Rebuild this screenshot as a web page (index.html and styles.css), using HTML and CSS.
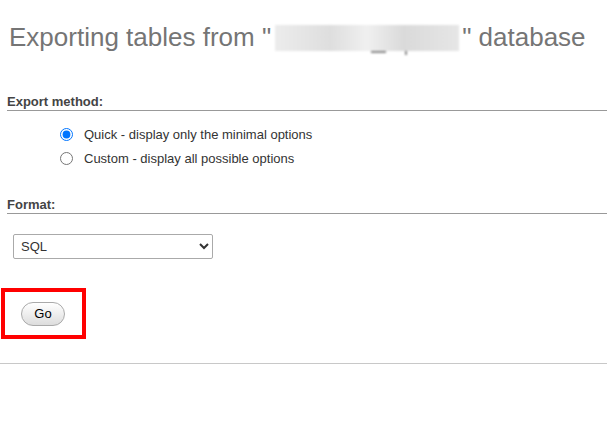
FILE: index.html
```html
<!DOCTYPE html>
<html>
<head>
<meta charset="utf-8">
<link rel="stylesheet" href="styles.css">
</head>
<body>
<h2 class="title">Exporting tables from "<span class="blur"><span class="blur-u"></span><span class="blur-p"></span></span>" database</h2>

<div class="section">
  <h3 class="sec-head">Export method:</h3>
  <ul class="options">
    <li class="opt"><input type="radio" name="m" checked><label>Quick - display only the minimal options</label></li>
    <li class="opt"><input type="radio" name="m"><label>Custom - display all possible options</label></li>
  </ul>
</div>

<div class="section fmt">
  <h3 class="sec-head">Format:</h3>
  <div class="select-wrap">
    <select class="select"><option>SQL</option></select>
  </div>
</div>

<div class="go-area">
  <div class="highlight">
    <button class="go">Go</button>
  </div>
</div>
<hr class="rule">
</body>
</html>
```
FILE: styles.css
```css
html, body {
  margin: 0;
  padding: 0;
  background: #fff;
  font-family: "Liberation Sans", Arial, sans-serif;
  font-size: 13px;
  color: #333;
}
.title {
  margin: 0;
  padding: 22px 0 0 9px;
  height: 40px;
  font-size: 26px;
  font-weight: normal;
  color: #757575;
  line-height: 30px;
  white-space: nowrap;
}
.blur {
  display: inline-block;
  position: relative;
  width: 184px;
  height: 26px;
  vertical-align: -5px;
  margin: 0 3px 0 4px;
  background: linear-gradient(90deg, #ececec, #dedede 30%, #f0f0f0 50%, #dadada 70%, #e6e6e6);
  filter: blur(1.2px);
}
.blur-u {
  position: absolute;
  left: 96px;
  top: 26px;
  width: 15px;
  height: 2px;
  background: #8a8a8a;
}
.blur-p {
  position: absolute;
  left: 130px;
  top: 26px;
  width: 2px;
  height: 4px;
  background: #8a8a8a;
}
.section {
  padding-top: 32px;
}
.sec-head {
  margin: 0 0 0 7px;
  padding-bottom: 1px;
  font-size: 13px;
  font-weight: bold;
  color: #444;
  border-bottom: 1px solid #999;
  line-height: 15px;
}
.options {
  list-style: none;
  margin: 0;
  padding: 11px 0 0 59px;
}
.opt {
  display: flex;
  align-items: center;
  height: 24px;
}
.opt input {
  margin: 0 11px 0 1px;
  width: 13px;
  height: 13px;
}
.opt label {
  color: #333;
}
.fmt {
  padding-top: 27px;
}
.select-wrap {
  padding: 20px 0 0 13px;
}
.select {
  width: 200px;
  height: 25px;
  font-family: "Liberation Sans", Arial, sans-serif;
  font-size: 13px;
  color: #333;
  border: 1px solid #aaa;
  border-radius: 2px;
  background: #fff;
  padding: 0 3px;
}
.go-area {
  padding: 29px 0 0 1px;
}
.highlight {
  width: 77px;
  height: 43px;
  border: 4px solid #ff0000;
  display: flex;
  align-items: center;
}
.go {
  margin-left: 16px;
  width: 44px;
  height: 24px;
  border: 1px solid #aaa;
  border-radius: 12px;
  background: linear-gradient(#fff, #ddd);
  font-family: "Liberation Sans", Arial, sans-serif;
  font-size: 13px;
  color: #000;
  padding: 0;
}
.rule {
  margin: 24px 0 0 0;
  border: 0;
  border-top: 1px solid #c8c8c8;
  height: 0;
}
```
